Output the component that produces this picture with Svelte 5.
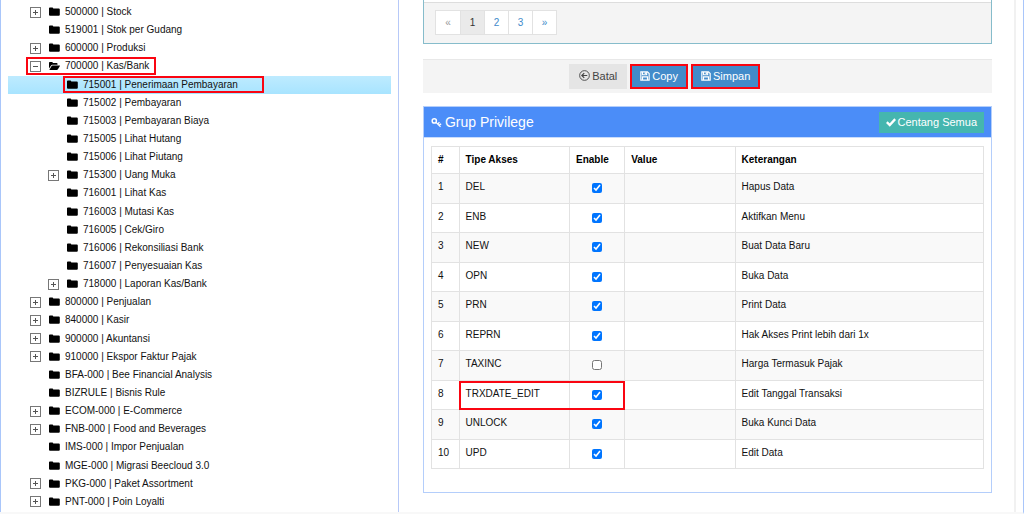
<script lang="ts">
  type Node = {
    label: string;
    level?: number;
    toggle?: '+' | '-';
    selected?: boolean;
    marked?: boolean;
  };

  const nodes: Node[] = [
    { label: '500000 | Stock', toggle: '+' },
    { label: '519001 | Stok per Gudang' },
    { label: '600000 | Produksi', toggle: '+' },
    { label: '700000 | Kas/Bank', toggle: '-', marked: true },
    { label: '715001 | Penerimaan Pembayaran', level: 1, selected: true, marked: true },
    { label: '715002 | Pembayaran', level: 1 },
    { label: '715003 | Pembayaran Biaya', level: 1 },
    { label: '715005 | Lihat Hutang', level: 1 },
    { label: '715006 | Lihat Piutang', level: 1 },
    { label: '715300 | Uang Muka', level: 1, toggle: '+' },
    { label: '716001 | Lihat Kas', level: 1 },
    { label: '716003 | Mutasi Kas', level: 1 },
    { label: '716005 | Cek/Giro', level: 1 },
    { label: '716006 | Rekonsiliasi Bank', level: 1 },
    { label: '716007 | Penyesuaian Kas', level: 1 },
    { label: '718000 | Laporan Kas/Bank', level: 1, toggle: '+' },
    { label: '800000 | Penjualan', toggle: '+' },
    { label: '840000 | Kasir', toggle: '+' },
    { label: '900000 | Akuntansi', toggle: '+' },
    { label: '910000 | Ekspor Faktur Pajak', toggle: '+' },
    { label: 'BFA-000 | Bee Financial Analysis' },
    { label: 'BIZRULE | Bisnis Rule' },
    { label: 'ECOM-000 | E-Commerce', toggle: '+' },
    { label: 'FNB-000 | Food and Beverages', toggle: '+' },
    { label: 'IMS-000 | Impor Penjualan' },
    { label: 'MGE-000 | Migrasi Beecloud 3.0' },
    { label: 'PKG-000 | Paket Assortment', toggle: '+' },
    { label: 'PNT-000 | Poin Loyalti', toggle: '+' },
  ];

  let privileges = $state([
    { type: 'DEL', enabled: true, note: 'Hapus Data' },
    { type: 'ENB', enabled: true, note: 'Aktifkan Menu' },
    { type: 'NEW', enabled: true, note: 'Buat Data Baru' },
    { type: 'OPN', enabled: true, note: 'Buka Data' },
    { type: 'PRN', enabled: true, note: 'Print Data' },
    { type: 'REPRN', enabled: true, note: 'Hak Akses Print lebih dari 1x' },
    { type: 'TAXINC', enabled: false, note: 'Harga Termasuk Pajak' },
    { type: 'TRXDATE_EDIT', enabled: true, note: 'Edit Tanggal Transaksi' },
    { type: 'UNLOCK', enabled: true, note: 'Buka Kunci Data' },
    { type: 'UPD', enabled: true, note: 'Edit Data' },
  ]);

  const pages = ['«', '1', '2', '3', '»'];

  function checkAll() {
    for (const p of privileges) p.enabled = true;
  }
</script>

{#snippet saveIcon()}
  <svg class="icon" viewBox="0 0 12 12" aria-hidden="true">
    <path d="M1 1h8l2 2v8H1z M3 1v3.5h5V1 M3 11V7h6v4" fill="none" stroke="currentColor" stroke-width="1.4" />
    <path d="M5.6 1.5h1.5v2.2H5.6z" fill="currentColor" />
  </svg>
{/snippet}

<div class="shell">
  <nav class="side">
    <ul class="tree">
      {#each nodes as node}
        <li class:selected={node.selected} class:child={node.level}>
          <div class="entry" class:marked={node.marked}>
            {#if node.toggle}
              <button class="toggle" aria-label={node.label}>
                <svg viewBox="0 0 11 11" aria-hidden="true">
                  <rect x="0.5" y="0.5" width="10" height="10" fill="#fff" stroke="#777" />
                  <path d={node.toggle === '+' ? 'M3 5.5h5M5.5 3v5' : 'M3 5.5h5'} stroke="#555" />
                </svg>
              </button>
            {:else}
              <span class="toggle"></span>
            {/if}
            <svg class="folder" viewBox="0 0 11 10" aria-hidden="true">
              {#if node.toggle === '-'}
                <path d="M0 7.6V1.8Q0 1 .8 1H3q.8 0 .8.8V2h3.9q.8 0 .8.8v.9H3.3q-.8 0-1.3.7z" />
                <path d="M.3 8.9 2.6 5q.3-.5.9-.5h7.1q.6 0 .3.5L8.9 8.3q-.4.6-1 .6z" />
              {:else}
                <path d="M0 1.3Q0 .4.9.4h2.4q.9 0 .9.9v.3h5.6q1 0 1 1v5.2q0 1-1 1H1q-1 0-1-1z" />
              {/if}
            </svg>
            <span>{node.label}</span>
          </div>
        </li>
      {/each}
    </ul>
  </nav>

  <main>
    <section class="list-panel">
      <div class="list-footer">
        <div class="pagination">
          {#each pages as page}
            <button class:active={page === '1'} disabled={page === '«'}>{page}</button>
          {/each}
        </div>
      </div>
    </section>

    <div class="actions">
      <button class="btn">
        <svg class="icon" viewBox="0 0 12 12" aria-hidden="true">
          <circle cx="6" cy="6" r="5.3" fill="none" stroke="currentColor" />
          <path d="M9 6H3.3M5.7 3.4 3.1 6l2.6 2.6" fill="none" stroke="currentColor" stroke-width="1.3" />
        </svg>
        Batal
      </button>
      <button class="btn primary">{@render saveIcon()}Copy</button>
      <button class="btn primary">{@render saveIcon()}Simpan</button>
    </div>

    <section class="panel">
      <header>
        <h2>
          <svg class="key" viewBox="0 0 12 12" aria-hidden="true">
            <circle cx="3.6" cy="4.3" r="2.3" fill="none" stroke="currentColor" stroke-width="1.6" />
            <path d="M5.2 5.6l5.2 5M7.3 7.8l1.9-2M9 9.3l2-1.9" fill="none" stroke="currentColor" stroke-width="1.4" />
          </svg>
          Grup Privilege
        </h2>
        <button class="check-all" onclick={checkAll}>
          <svg class="icon" viewBox="0 0 12 12" aria-hidden="true">
            <path d="M1 6.2 4.5 9.6 11 2.6" fill="none" stroke="currentColor" stroke-width="2.8" />
          </svg>
          Centang Semua
        </button>
      </header>
      <table>
        <colgroup>
          <col class="c-no" /><col class="c-type" /><col class="c-enable" /><col class="c-type" /><col />
        </colgroup>
        <thead>
          <tr>
            <th>#</th>
            <th>Tipe Akses</th>
            <th>Enable</th>
            <th>Value</th>
            <th>Keterangan</th>
          </tr>
        </thead>
        <tbody>
          {#each privileges as p, i}
            <tr class:marked-row={p.type === 'TRXDATE_EDIT'}>
              <td>{i + 1}</td>
              <td><label for="priv-{i}">{p.type}</label></td>
              <td class="enable"><input id="priv-{i}" type="checkbox" bind:checked={p.enabled} /></td>
              <td></td>
              <td>{p.note}</td>
            </tr>
          {/each}
        </tbody>
      </table>
    </section>
  </main>
</div>

<style>
  :global(body) {
    margin: 0;
    background: #fff;
  }
  .shell {
    display: flex;
    box-sizing: border-box;
    min-height: 100vh;
    border-bottom: 2px solid #f8f8f8;
    border-right: 1px solid #a9c6fa;
    font-family: "Liberation Sans", Arial, sans-serif;
    font-size: 10px;
    line-height: 14px;
    color: #111;
  }
  button {
    font: inherit;
    color: inherit;
    border: 0;
    padding: 0;
    cursor: pointer;
  }

  .side {
    display: flex;
    box-sizing: border-box;
    width: 39%;
    min-width: 300px;
    border-left: 1px solid #a9c6fa;
    border-right: 1px solid #b7c9f8;
    padding: 3px 7px 1px;
  }
  .tree {
    flex: 1;
    display: grid;
    margin: 0;
    padding: 0;
    list-style: none;
  }
  .tree li {
    display: flex;
    min-height: 18px;
    padding-left: 22px;
  }
  .tree li.child { padding-left: 40px; }
  .tree li.selected { background: linear-gradient(#beebff, #a8e4ff); }
  .entry {
    position: relative;
    display: flex;
    align-items: center;
    white-space: nowrap;
  }
  .entry.marked::after {
    content: '';
    position: absolute;
    inset: 0 -7px 1px -4px;
    border: 2px solid #fa0511;
    pointer-events: none;
  }
  .selected .entry.marked::after {
    left: 15px;
    right: -26px;
  }
  .toggle {
    display: block;
    width: 11px;
    height: 11px;
    margin-right: 8px;
    background: none;
  }
  .toggle svg { display: block; }
  .folder {
    width: 11px;
    height: 10px;
    margin-right: 5px;
  }

  main {
    flex: 1;
    min-width: 0;
    margin-right: 7px;
    border-right: 2px solid #f1f1f1;
    padding: 0 22px 18px 24px;
  }
  .list-panel {
    border: 1px solid #86bccb;
    border-top: 0;
    padding-top: 2px;
  }
  .list-footer {
    border-top: 1px solid #ddd;
    background: #f4f4f4;
    padding: 7px 11px 8px;
  }
  .pagination {
    display: inline-flex;
    vertical-align: top;
    border: 1px solid #e2e2e2;
  }
  .pagination button {
    width: 24px;
    height: 23px;
    background: #fff;
    color: #428bca;
    border-left: 1px solid #e2e2e2;
  }
  .pagination button:first-child {
    border-left: 0;
    color: #999;
  }
  .pagination button.active {
    background: #eaeaea;
    color: #333;
  }

  .actions {
    display: flex;
    gap: 3px;
    margin-top: 15px;
    border-top: 1px solid #e8e8e8;
    background: #f4f4f4;
    padding: 4px 4px 4px calc(25% + 4px);
  }
  .btn {
    display: flex;
    align-items: center;
    height: 25px;
    padding: 0 10px 2px;
    background: #e5e5e5;
    color: #444;
    font-size: 11px;
  }
  .btn.primary {
    border: 2px solid #fa0511;
    padding: 0 8px 2px;
    background: #428bca;
    color: #fff;
  }
  .icon {
    width: 10px;
    height: 10px;
    margin-right: 2px;
  }
  .btn:first-child .icon {
    width: 11px;
    height: 11px;
  }

  .panel {
    margin-top: 13px;
    border: 1px solid #b4cefb;
    padding-bottom: 23px;
  }
  header {
    display: flex;
    align-items: center;
    justify-content: space-between;
    height: 30px;
    padding: 0 7px;
    border-bottom: 1px solid #c9dcfc;
    background: #4b8df8;
    color: #fff;
  }
  h2 {
    display: flex;
    align-items: center;
    margin: 0;
    font-size: 14px;
    font-weight: 400;
  }
  .key {
    width: 11px;
    height: 11px;
    margin-right: 3px;
  }
  .check-all {
    display: flex;
    align-items: center;
    height: 21px;
    padding: 0 7px 1px;
    background: #45b6af;
    color: #fff;
    font-size: 11px;
  }

  table {
    position: relative;
    width: calc(100% - 14px);
    margin: 8px 7px 0;
    table-layout: fixed;
    border-collapse: collapse;
  }
  .c-no { width: 5%; }
  .c-type { width: 20%; }
  .c-enable { width: 10%; }
  th, td {
    box-sizing: border-box;
    border: 1px solid #e2e2e2;
    padding: 6px;
    text-align: left;
    vertical-align: top;
  }
  th {
    height: 27px;
    color: #000;
  }
  td { height: 29px; }
  tbody tr:nth-child(odd) { background: #f9f9f9; }
  tbody tr:nth-child(odd) td { height: 30px; }
  .enable { text-align: center; }
  .enable input {
    width: 10px;
    height: 10px;
    margin: 3px 0 0;
    vertical-align: top;
    accent-color: #0075ff;
  }
  /* frame spanning the type and enable cells */
  .marked-row { position: relative; }
  .marked-row td:first-child::after {
    content: '';
    position: absolute;
    top: 0;
    bottom: 0;
    left: 5%;
    width: 30%;
    box-sizing: border-box;
    border: 2px solid #fa0511;
    pointer-events: none;
  }
</style>
